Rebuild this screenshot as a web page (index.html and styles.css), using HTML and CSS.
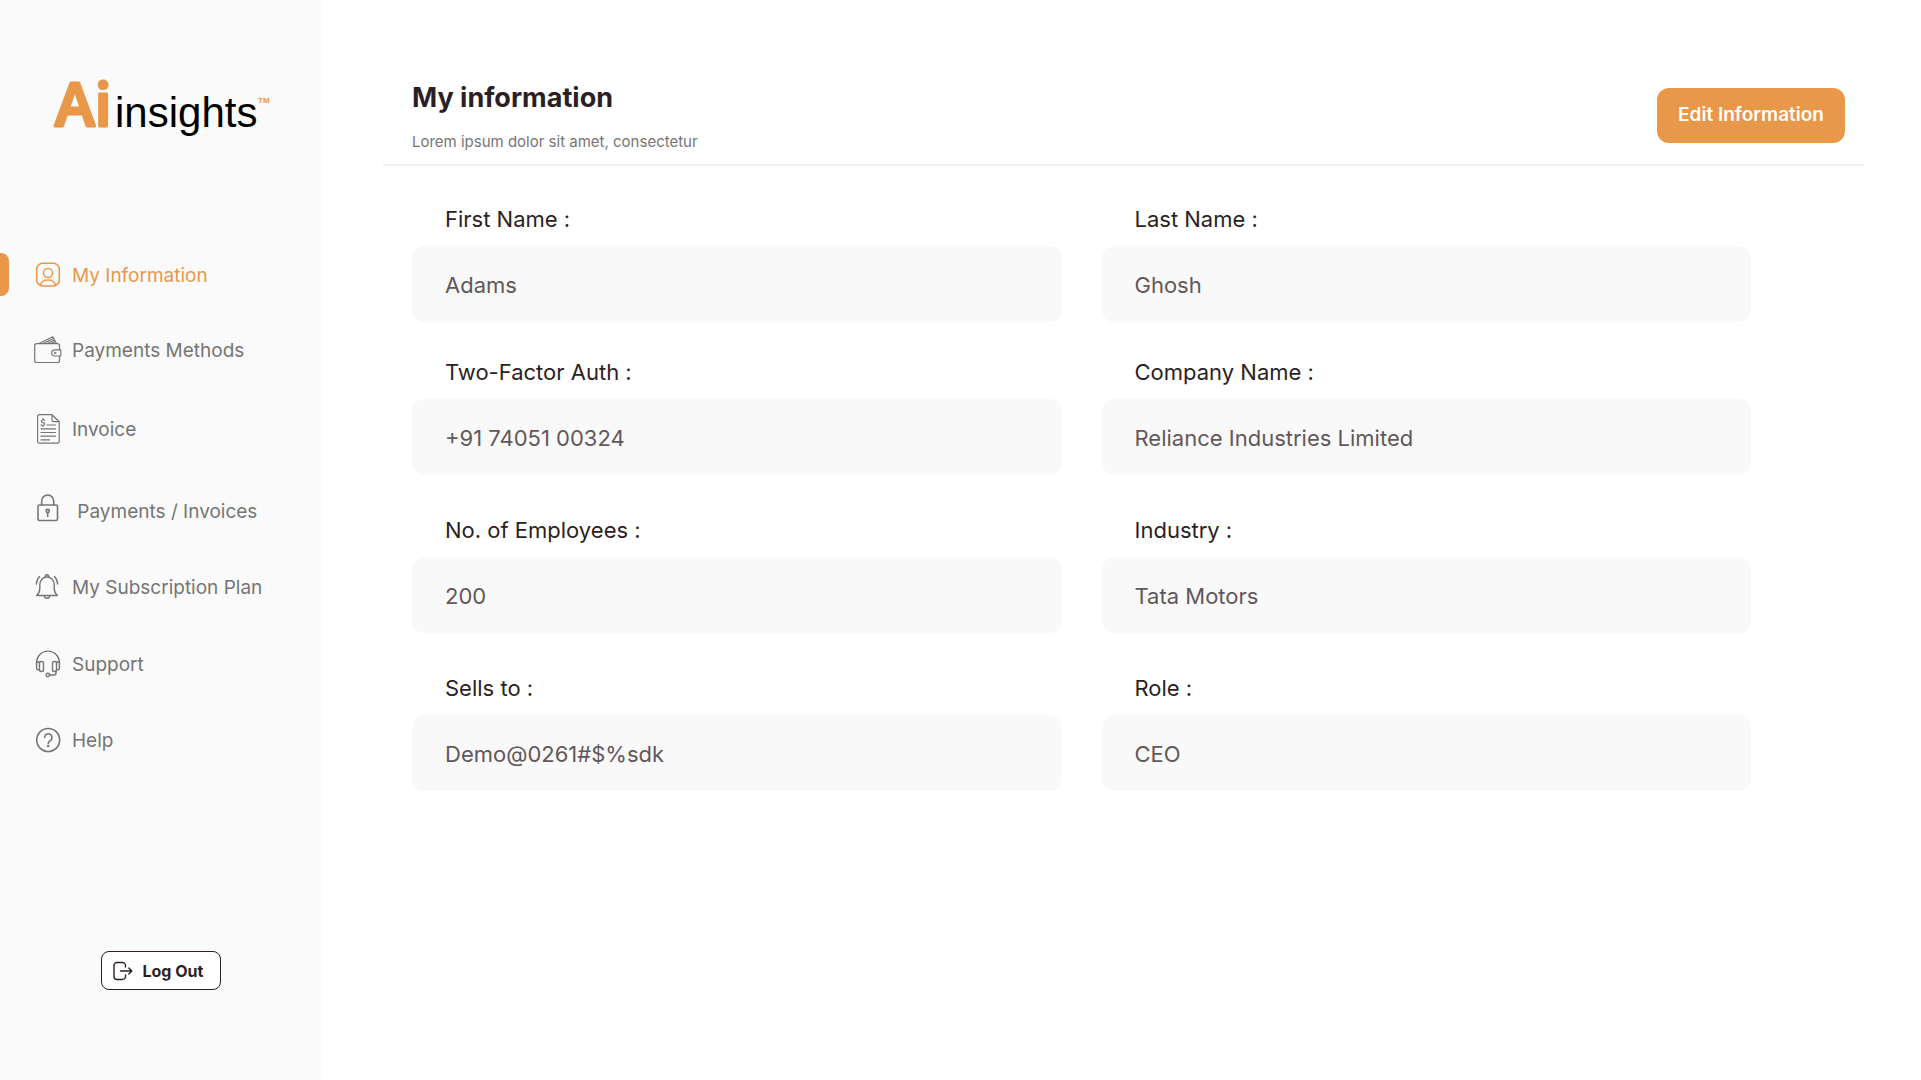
FILE: index.html
```html
<!DOCTYPE html>
<html lang="en">
<head>
<meta charset="utf-8">
<meta name="viewport" content="width=device-width, initial-scale=1">
<title>My information - Ai insights</title>
<link rel="stylesheet" href="styles.css">
</head>
<body>
<div class="app">
  <aside class="sidebar">
    <a class="logo" href="#" aria-label="Ai insights">
      <svg width="240" height="84" viewBox="-10 -16 240 84">
        <text class="logo-ai" x="2" y="50">Ai</text>
        <text class="logo-word" x="62" y="51">insights</text>
        <text class="logo-tm" x="205" y="27">TM</text>
      </svg>
    </a>
    <nav class="nav">
      <a class="nav-item active" href="#">
        <svg class="icon" viewBox="0 0 28 28"><g stroke-width="1.500"><rect x="2.700" y="2.300" width="22.600" height="22.600" rx="6"/><circle cx="14" cy="12" r="4.500"/><path d="M6.500 24c1-3.500 4-5 7.500-5s6.500 1.500 7.500 5"/></g></svg>
        <span>My Information</span>
      </a>
      <a class="nav-item" href="#">
        <svg class="icon" viewBox="0 0 28 28"><path d="M25.500 20v4.700a1.800 1.800 0 0 1-1.800 1.800H2.500A1.800 1.800 0 0 1 .700 24.700V9.500a1.800 1.800 0 0 1 1.800-1.800h21.200a1.800 1.800 0 0 1 1.800 1.800v4.300M26.800 13.800h-6a3.100 3.100 0 0 0 0 6.200h6zM5 7.500 18.800.800l3.700 6.700M9 7.500l10.500-5M13 7.500l7.500-3.500M17 7.500l4.300-2" stroke-width="1.200"/><circle cx="21" cy="16.900" r=".8"/></svg>
        <span>Payments Methods</span>
      </a>
      <a class="nav-item" href="#">
        <svg class="icon icon-tall" viewBox="0 0 28 30"><path d="M5.500.700H18l7.200 7V27.300a1.900 1.900 0 0 1-1.900 1.900H5.500a1.900 1.900 0 0 1-1.900-1.900V2.600A1.900 1.900 0 0 1 5.500.700zM18 .700v5.200a1.800 1.800 0 0 0 1.800 1.800h5.400M13 11h8.500M7 14.800h14.500M7 18.500h14.500M7 22.200h14.500M7 25.900h8.500M10.500 6.300C9.500 5.300 7.300 5.600 7.400 7.200c.1 1.800 3.200 1 3.200 2.900 0 1.700-2.500 1.800-3.500.700M9 4.600v1.200M9 11.300v1.200" stroke-width="1.200"/></svg>
        <span>Invoice</span>
      </a>
      <a class="nav-item" href="#">
        <svg class="icon icon-tall" viewBox="0 2 28 34"><g stroke-width="1.600"><rect x="4" y="13" width="19.500" height="15.500" rx="1.500"/><path d="M7.700 13V9a6 6 0 0 1 12 0v4"/><circle cx="13.700" cy="19" r="1.600"/><path d="M13.700 20.500v4"/></g></svg>
        <span>&nbsp;Payments / Invoices</span>
      </a>
      <a class="nav-item" href="#">
        <svg class="icon" viewBox="0 0 28 28"><path d="M2.600 22.500h20.800c-2.400-2-3.200-3.800-3.200-7v-4c0-4.200-3-7.500-7.200-7.500s-7.200 3.300-7.200 7.500v4c0 3.200-.8 5-3.200 7zM10.300 22.500a2.700 2.700 0 0 0 5.400 0M11.300 4.200a1.800 1.800 0 1 1 3.400 0M5.600 3.500C3.500 5.500 2.600 8 2.400 11M20.400 3.500c2.100 2 3 4.500 3.200 7.500" stroke-width="1.400"/></svg>
        <span>My Subscription Plan</span>
      </a>
      <a class="nav-item" href="#">
        <svg class="icon" viewBox="0 0 28 28"><path d="M2.600 18v-5.500a11.400 11.400 0 0 1 22.800 0V18M5.500 12H4a1.400 1.400 0 0 0-1.400 1.400v5A1.400 1.400 0 0 0 4 19.800h1.500M22.500 12H24a1.400 1.400 0 0 1 1.400 1.400v5a1.400 1.400 0 0 1-1.400 1.400h-1.500M22 21.500v1.500a2 2 0 0 1-2 2h-4.500" stroke-width="1.400"/><g stroke-width="1.400"><rect x="5.500" y="11.500" width="4" height="10" rx="1.800"/><rect x="18.500" y="11.500" width="4" height="10" rx="1.800"/><circle cx="13.800" cy="25" r="1.700"/></g></svg>
        <span>Support</span>
      </a>
      <a class="nav-item" href="#">
        <svg class="icon" viewBox="0 0 28 28"><g stroke-width="1.600"><circle cx="14.200" cy="14" r="11.500"/><path d="M10.600 11.500a3.700 3.700 0 1 1 5.700 3.100c-1.400.9-2.100 1.400-2.100 3"/><circle cx="14.200" cy="20" r=".5"/></g></svg>
        <span>Help</span>
      </a>
    </nav>
    <button class="logout" type="button">
      <svg class="logout-icon" viewBox="0 0 20 20"><path d="M12.500 6V4.500a3 3 0 0 0-3-3H4a3 3 0 0 0-3 3v11a3 3 0 0 0 3 3h5.500a3 3 0 0 0 3-3V14M7.500 10h11M15.800 7l3 3-3 3"/></svg>
      <span>Log Out</span>
    </button>
  </aside>

  <main class="main">
    <header class="header">
      <div>
        <h1>My information</h1>
        <p class="subtitle">Lorem ipsum dolor sit amet, consectetur</p>
      </div>
      <button class="edit" type="button">Edit Information</button>
    </header>
    <form class="fields">
      <div class="field"><label for="first">First Name :</label><input id="first" type="text" value="Adams" readonly></div>
      <div class="field"><label for="last">Last Name :</label><input id="last" type="text" value="Ghosh" readonly></div>
      <div class="field"><label for="auth">Two-Factor Auth :</label><input id="auth" type="text" value="+91 74051 00324" readonly></div>
      <div class="field"><label for="company">Company Name :</label><input id="company" type="text" value="Reliance Industries Limited" readonly></div>
      <div class="field"><label for="employees">No. of Employees :</label><input id="employees" type="text" value="200" readonly></div>
      <div class="field"><label for="industry">Industry :</label><input id="industry" type="text" value="Tata Motors" readonly></div>
      <div class="field"><label for="sells">Sells to :</label><input id="sells" type="text" value="Demo@0261#$%sdk" readonly></div>
      <div class="field"><label for="role">Role :</label><input id="role" type="text" value="CEO" readonly></div>
    </form>
  </main>
</div>
</body>
</html>
```
FILE: styles.css
```css
* { box-sizing: border-box; }

body {
  margin: 0;
  background: #fff;
  color: #2b1f23;
  font-family: Inter, "Liberation Sans", sans-serif;
}

button, input { font-family: inherit; }

.app {
  display: flex;
  min-height: 100vh;
}

/* Sidebar */
.sidebar {
  display: flex;
  flex-direction: column;
  flex: 0 0 321px;
  padding: 60px 0 90px;
  background: #fafafa;
}

.logo {
  height: 84px;
  margin-left: 43px;
}

.logo svg { display: block; }

.logo-ai {
  font: 600 60px "Open Sans", sans-serif;
  fill: #e99748;
  stroke: #e99748;
  stroke-width: 3px;
  stroke-linejoin: round;
}

.logo-word {
  font: 42px "Liberation Sans", sans-serif;
  fill: #000;
}

.logo-tm {
  font: 700 8px "Liberation Sans", sans-serif;
  fill: #e99748;
}

.nav {
  display: grid;
  grid-template-rows: 74px 76px 82px 82px 70px 84px 68px;
  margin-top: 94px;
}

.nav-item {
  position: relative;
  display: flex;
  align-items: center;
  gap: 10px;
  padding-left: 34px;
  color: #757575;
  font-size: 19px;
  line-height: 24px;
  text-decoration: none;
}

.nav-item span { padding-top: 2px; }

.nav-item.active { color: #e99748; }

.nav-item.active::before {
  content: "";
  position: absolute;
  left: 0;
  top: 15px;
  width: 9px;
  height: 43px;
  border-radius: 0 8px 8px 0;
  background: #e99748;
}

.icon {
  width: 28px;
  height: 28px;
  fill: none;
  stroke: currentColor;
  stroke-linecap: round;
  stroke-linejoin: round;
}

.icon-tall { height: 34px; }

.logout {
  display: flex;
  align-items: center;
  gap: 10px;
  align-self: center;
  width: 120px;
  height: 39px;
  margin-top: auto;
  padding: 0 0 0 11px;
  border: 1px solid #2b1f23;
  border-radius: 8px;
  background: #fff;
  color: #2b1f23;
  font-size: 16px;
  font-weight: 700;
}

.logout-icon {
  width: 20px;
  height: 20px;
  fill: none;
  stroke: currentColor;
  stroke-width: 1.4;
  stroke-linecap: round;
  stroke-linejoin: round;
}

/* Content */
.main {
  flex: 1;
  min-width: 0;
  padding: 80px 57px 40px 62px;
}

.header {
  display: flex;
  justify-content: space-between;
  align-items: flex-start;
  padding: 0 19px 11px 29px;
  border-bottom: 2px solid #eee;
}

h1 {
  margin: 0;
  font-size: 27px;
  font-weight: 700;
  line-height: 36px;
}

.subtitle {
  margin: 15px 0 0;
  color: #757575;
  font-size: 15px;
  line-height: 22px;
}

.edit {
  width: 188px;
  height: 55px;
  margin-top: 8px;
  padding: 0 0 2px;
  border: 0;
  border-radius: 12px;
  background: #e99748;
  color: #fff;
  font-size: 19px;
  font-weight: 600;
}

.fields {
  display: grid;
  grid-template-columns: 1fr 1fr;
  grid-template-rows: 153px 158px 158px auto;
  column-gap: 40px;
  padding: 38px 113px 0 29px;
}

.field label {
  display: block;
  margin: 0 0 12px 33px;
  font-size: 22px;
  line-height: 30px;
}

.field input {
  display: block;
  width: 100%;
  height: 76px;
  padding: 2px 33px 0;
  border: 0;
  border-radius: 12px;
  background: #f9f9f9;
  color: #62575b;
  font-size: 22px;
}
```
